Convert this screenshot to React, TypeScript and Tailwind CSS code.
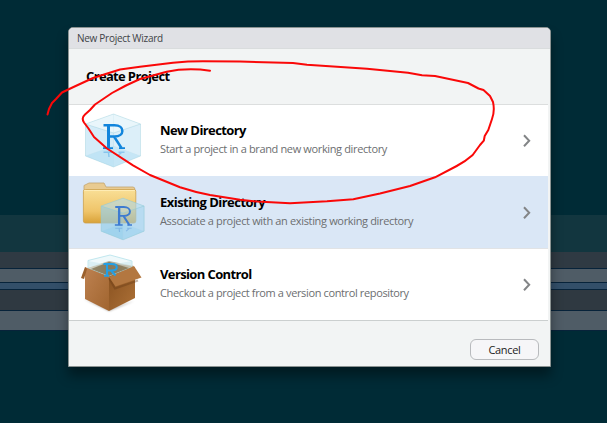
import type { ReactNode } from "react";

function Cube({ muted = false }: { muted?: boolean }) {
  const ink = muted ? "#3d7bd0" : "#1285dc";
  return (
    <>
      <path d="M0 10 28 0 55 10V42L28 53 0 42Z" fill={muted ? "#9dd2ec" : "#d8edf8"} fillOpacity={muted ? 0.55 : 0.9} />
      <path d="M0 10 28 0 55 10 28 19Z" fill="#eef8fb" fillOpacity={muted ? 0.15 : 0.75} />
      <path d="M0 10 28 19V53L0 42Z" fill={muted ? "#8fcbe3" : "#c4e4f4"} fillOpacity=".3" />
      <path d="M0 42 28 32 55 42 28 53Z" fill="#7cc9ec" fillOpacity=".22" />
      <path d="M28 19V53M28 0V32L0 42M28 32 55 42" fill="none" stroke="#b5dbe6" strokeOpacity=".3" strokeWidth=".7" />
      <path d="M0 10 28 0 55 10V42L28 53 0 42ZM0 10 28 19 55 10" fill="none" stroke="#93cbd8" strokeOpacity={muted ? 0.9 : 0.45} strokeWidth=".8" />
      <g fill="none" stroke={ink}>
        <path d="M18 11.3H29C39.5 11.3 39.5 22.5 29 22.5H23M28.5 22.5 36 34" strokeWidth="2.5" />
        <path d="M23 11.3V34" strokeWidth="3" />
        <path d="M17.5 34.2H27.5M33.5 34.2H39.5" strokeWidth="1.8" />
        <path d="M18 38.3H27M33 38.3H39M23 38.5 23.5 43M36 38.5 32 42" strokeWidth="1.5" opacity=".32" />
      </g>
    </>
  );
}

function NewIcon() {
  return (
    <svg className="block h-[71px] w-[91px]" viewBox="69 105 91 71">
      <g transform="translate(85.5 114)"><Cube /></g>
    </svg>
  );
}

function FolderIcon() {
  return (
    <svg className="block h-[71px] w-[91px]" viewBox="69 177 91 71">
      <defs>
        <linearGradient id="folder" x2="0" y2="1"><stop stopColor="#f9df96" /><stop offset=".65" stopColor="#efc469" /><stop offset="1" stopColor="#d9a238" /></linearGradient>
      </defs>
      <path d="M84 190V185.5L87 184 89 183H104L106 187H133Q135 187 135 190V194H84Z" fill="#e9cb91" stroke="#c3a46e" strokeWidth=".8" />
      <rect x="83.4" y="189.5" width="52.4" height="33.5" rx="2" fill="url(#folder)" stroke="#cda14e" strokeWidth=".8" />
      <path d="M84 190.5H135" stroke="#fff0bd" strokeWidth=".8" />
      <g transform="translate(101.2 198.2) scale(.78 .785)"><Cube muted /></g>
    </svg>
  );
}

function BoxIcon() {
  return (
    <svg className="block h-[71px] w-[91px]" viewBox="69 249 91 71">
      <defs>
        <linearGradient id="left" x2="1" y2="1"><stop stopColor="#bd8150" /><stop offset="1" stopColor="#a1652f" /></linearGradient>
        <linearGradient id="right" x2="1" y2="1"><stop stopColor="#87501f" /><stop offset="1" stopColor="#ad7137" /></linearGradient>
        <linearGradient id="inside" x2="1"><stop stopColor="#cdbb9a" /><stop offset=".5" stopColor="#7d653f" /><stop offset="1" stopColor="#b49870" /></linearGradient>
        <filter id="soft"><feGaussianBlur stdDeviation="1" /></filter>
      </defs>
      <path d="M84 299 109 311 134 301 110 308Z" fill="#655a50" opacity=".55" filter="url(#soft)" />
      <path d="M87 268 109 261 134 266 109 278Z" fill="url(#inside)" />
      <path d="M88 260.5 110 255 132 261V267L109 276 88 268Z" fill="#dff3f8" fillOpacity=".5" stroke="#b4e2eb" strokeWidth=".8" />
      <path d="M88 261 110 265 132 261V266L110 263 88 267Z" fill="#cfeaf0" fillOpacity=".65" />
      <path d="M91 269 109 262 129 268 109 276Z" fill="#746039" fillOpacity=".65" />
      <path d="M85 267 109 277V311L85 299Z" fill="url(#left)" />
      <path d="M109 277 135 267V298L109 311Z" fill="url(#right)" />
      <path d="M85 267 87 269 84 279 81 278Z" fill="#9b612d" />
      <path d="M109 278 115 288.5 138 280.5" fill="none" stroke="#5e3412" strokeWidth="2" opacity=".35" />
      <path d="M109 277 134 266 141.5 277.5 115.5 286.5Z" fill="#b37740" />
      <path d="M103.5 264H111.5C118.5 264 118.5 270.5 111.5 270.5H107.5M107 264V276M104 275.8H109M111 270.5 115.5 275.5" fill="none" stroke="#249fe4" strokeWidth="2.1" />
    </svg>
  );
}

function Row({ title, text, icon, selected = false, last = false, titleSpacing, textSpacing }: { title: string; text: string; icon: ReactNode; selected?: boolean; last?: boolean; titleSpacing: string; textSpacing: string }) {
  return (
    <div className={`flex h-[72px] w-[479px] border-b ${selected ? "border-[#e1e3e5] bg-[#dae7f6]" : last ? "border-[#cbcfcf] bg-white" : "border-[#dae7f6] bg-white"}`}>
      {icon}
      <div className="flex-1 pt-4">
        <div className={`h-[18px] whitespace-nowrap text-[13px] leading-[18px] font-bold text-black ${titleSpacing}`}>{title}</div>
        <div className={`mt-0.5 h-4 whitespace-nowrap text-[11px] leading-4 text-[#6c6e70] ${textSpacing}`}>{text}</div>
      </div>
      <svg className="mt-[29px] mr-[17px] h-[14px] w-2" viewBox="0 0 8 14" fill="none" stroke="#838587" strokeWidth="2"><path d="M1 1.2 6.2 6.7 1 12.2" /></svg>
    </div>
  );
}

export default function App() {
  return (
    <div className="relative h-[423px] w-[607px] overflow-hidden bg-[#002b36] font-['Open_Sans',sans-serif]">
      <div className="flex h-[423px] flex-col pt-[215px]">
        <div className="h-[37px] bg-[#12363f]" />
        <div className="h-4 bg-[#2f3a43]" />
        <div className="h-[15px] border-y border-[#07233a] bg-[#4f5c66]" />
        <div className="h-[7px] border-b border-[#07233a] bg-[#334f69]" />
        <div className="h-[21px] border-b border-[#07233a] bg-[#2f3941]" />
        <div className="h-[20px] border-b border-[#07233a] bg-[#4f5c66]" />
      </div>
      <div className="absolute top-[27px] left-[68px] flex h-[340px] w-[483px] flex-col overflow-hidden rounded-t-[5px] border border-[#8b9392] bg-[#f2f4f4] shadow-[0_9px_12px_rgba(0,0,0,.38)]">
        <div className="h-[21px] border-b border-[#d9dcdd] bg-[#e0e1e5] pl-2 text-[10px] leading-[21px] tracking-[-.28px] text-[#414347]">New Project Wizard</div>
        <div className="h-[56px] w-[479px] border-b border-[#dcdede] pl-[17px] text-[13px] leading-[54px] font-bold tracking-[-.65px] text-black">Create Project</div>
        <Row title="New Directory" text="Start a project in a brand new working directory" icon={<NewIcon />} titleSpacing="tracking-[-.6px]" textSpacing="tracking-[-.36px]" />
        <Row title="Existing Directory" text="Associate a project with an existing working directory" icon={<FolderIcon />} selected titleSpacing="tracking-[-.54px]" textSpacing="tracking-[-.34px]" />
        <Row title="Version Control" text="Checkout a project from a version control repository" icon={<BoxIcon />} last titleSpacing="tracking-[-.62px]" textSpacing="tracking-[-.37px]" />
        <div className="flex justify-end pt-[18px] pr-[11px]">
          <button className="h-[21px] w-[69px] rounded-[6px] border border-[#b8babd] bg-[#f6f6f8] text-[11px] leading-[19px] tracking-[-.35px] text-[#222]">Cancel</button>
        </div>
      </div>
      <svg className="absolute inset-0 h-[423px] w-[607px]" viewBox="0 0 607 423" fill="none">
        <path d="M47.5 114.5 49 109 52 103 56 99 62 92.5 73.5 87 93 78 120 69.5 140 66.7 173 62.7Q188 61.3 203 61.3L240 61.5 293 63 307 64.7 367 68.7 408 72.7 422 75.3 435 75.9 468 83 478.5 88.5 483.5 90 490 96 493 102Q495 111 492 119L488.3 130 484.7 136 483.8 140.7 480 145 472.7 155Q466 161 456.7 166L435 177.3 410 186 380 193.5 353.3 199.3 327 201.3 290 203.2 257 201.5 240 199.7 210 195Q194 192 180 187.3L150 175 133 165.3 107 148.5 94 137 88.5 128.5 84 122.5Q81 118 85 114.5L90 110 95 104.5 112 93Q126 85 140 79L166.7 71.8Q187 67.5 210 70.7" stroke="#fa0808" strokeWidth="2" strokeLinecap="round" strokeLinejoin="round" />
      </svg>
    </div>
  );
}
